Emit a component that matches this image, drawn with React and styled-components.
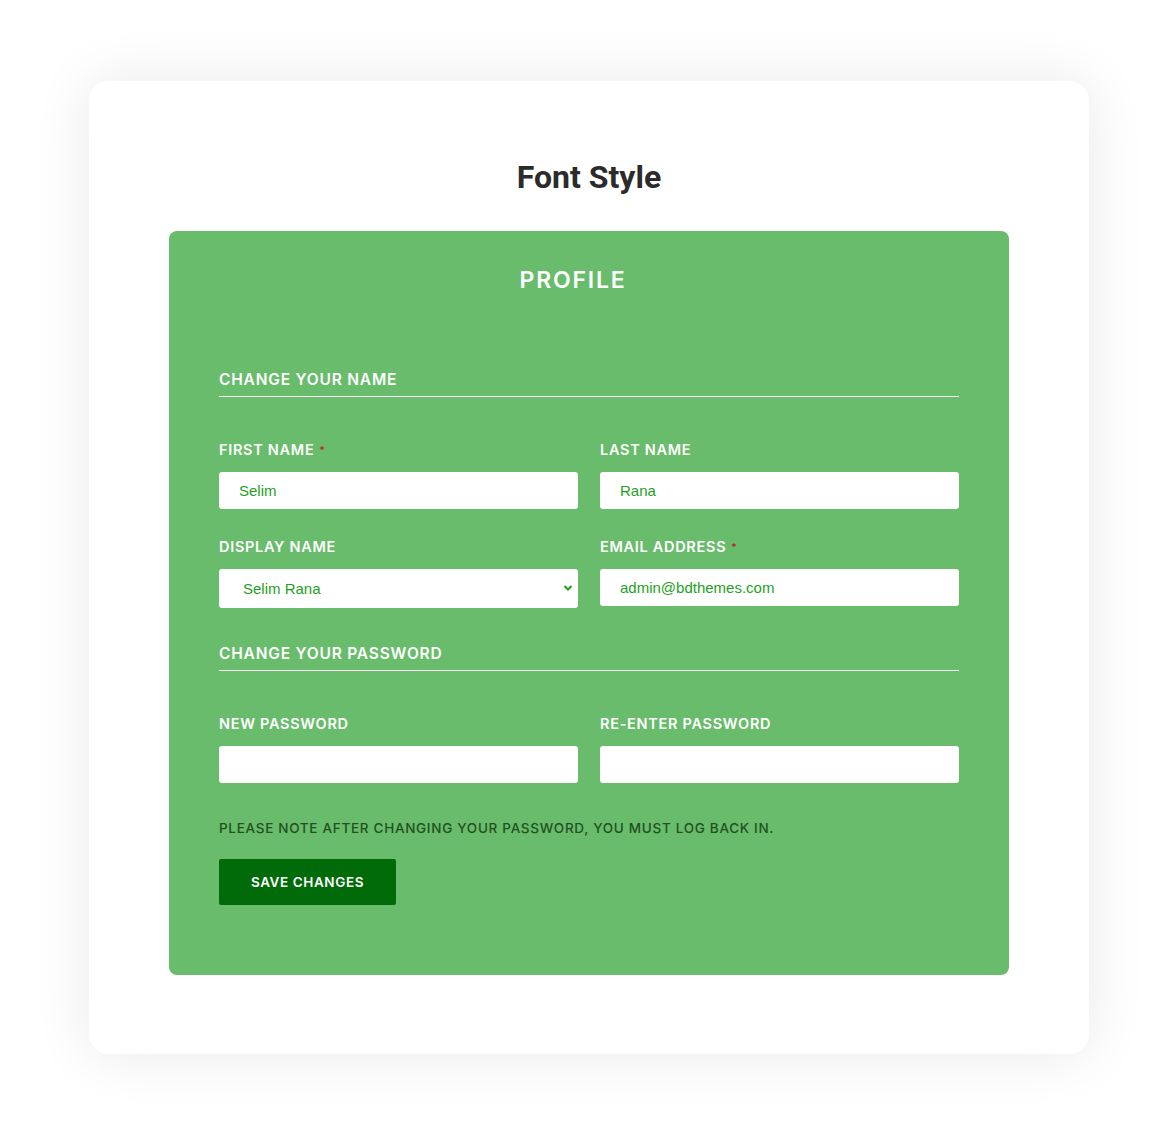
import React from "react"
import styled, { createGlobalStyle } from "styled-components"

const GlobalStyle = createGlobalStyle`
  html, body {
    margin: 0;
    padding: 0;
    background: #ffffff;
  }
  * {
    box-sizing: border-box;
  }
`

const Page = styled.div`
  width: 1173px;
  min-height: 1130px;
  padding: 81px 0 0 89px;
`

const Card = styled.div`
  width: 1000px;
  height: 973px;
  background: #ffffff;
  border-radius: 20px;
  box-shadow: 0 0 60px rgba(0, 0, 0, 0.09);
  padding: 76px 80px 80px;
`

const Title = styled.h2`
  margin: 0 0 34px;
  text-align: center;
  font-family: Roboto, "Liberation Sans", sans-serif;
  font-weight: 700;
  font-size: 32px;
  line-height: 40px;
  color: #2b2b2b;
`

const Panel = styled.div`
  background: #68bc6b;
  border-radius: 8px;
  padding: 34px 50px 70px;
  font-family: Inter, "Liberation Sans", sans-serif;
`

const PanelTitle = styled.h3`
  margin: 0 0 75px;
  padding-right: 32px;
  text-align: center;
  color: #ffffff;
  font-size: 23px;
  font-weight: 600;
  line-height: 30px;
  letter-spacing: 1.8px;
`

const SectionTitle = styled.div`
  color: #ffffff;
  font-size: 15.5px;
  font-weight: 600;
  line-height: 20px;
  letter-spacing: 0.8px;
  padding-bottom: 6px;
  border-bottom: 1px solid #ffffff;
  margin-bottom: ${(p) => p.$gap || 40}px;
`

const Grid = styled.div`
  display: grid;
  grid-template-columns: 359px 359px;
  column-gap: 22px;
  row-gap: 29px;
  margin-bottom: ${(p) => p.$gap || 0}px;
`

const Field = styled.div`
  display: flex;
  flex-direction: column;
`

const Label = styled.label`
  color: #ffffff;
  font-size: 14.5px;
  font-weight: 600;
  line-height: 18px;
  letter-spacing: 0.7px;
  margin-bottom: 13px;
`

const Star = styled.span`
  color: #c0211f;
  font-size: 10px;
  margin-left: 5px;
  vertical-align: top;
`

const Input = styled.input`
  height: 37px;
  border: none;
  outline: none;
  border-radius: 3px;
  background: #ffffff;
  padding: 0 20px;
  font-family: Arial, "Liberation Sans", sans-serif;
  font-size: 15px;
  color: #1f9f1f;
`

const SelectWrap = styled.div`
  position: relative;
  height: 39px;
  border-radius: 3px;
  background: #ffffff;
`

const Select = styled.select`
  width: 100%;
  height: 100%;
  border: none;
  outline: none;
  background: transparent;
  appearance: none;
  padding: 0 24px;
  font-family: Arial, "Liberation Sans", sans-serif;
  font-size: 15px;
  color: #1f9f1f;
`

const Chevron = styled.svg`
  position: absolute;
  right: 5px;
  top: 15px;
  pointer-events: none;
`

const Note = styled.p`
  margin: 0 0 22px;
  color: #22501f;
  font-size: 13.5px;
  font-weight: 500;
  line-height: 18px;
  letter-spacing: 0.7px;
`

const Button = styled.button`
  width: 177px;
  height: 46px;
  border: none;
  border-radius: 2px;
  background: #006b08;
  color: #ffffff;
  font-family: Inter, "Liberation Sans", sans-serif;
  font-size: 13.5px;
  font-weight: 600;
  letter-spacing: 0.6px;
  cursor: pointer;
`

export default function App() {
  return (
    <Page>
      <GlobalStyle />
      <Card>
        <Title>Font Style</Title>
        <Panel>
          <PanelTitle>PROFILE</PanelTitle>

          <SectionTitle $gap={44}>CHANGE YOUR NAME</SectionTitle>
          <Grid $gap={36}>
            <Field>
              <Label>
                FIRST NAME<Star>*</Star>
              </Label>
              <Input defaultValue="Selim" />
            </Field>
            <Field>
              <Label>LAST NAME</Label>
              <Input defaultValue="Rana" />
            </Field>
            <Field>
              <Label>DISPLAY NAME</Label>
              <SelectWrap>
                <Select defaultValue="Selim Rana">
                  <option>Selim Rana</option>
                  <option>Selim</option>
                  <option>Rana</option>
                </Select>
                <Chevron width="10" height="8" viewBox="0 0 10 8">
                  <path d="M1.5 2 L5 5.5 L8.5 2" fill="none" stroke="#1f9f1f" strokeWidth="2" />
                </Chevron>
              </SelectWrap>
            </Field>
            <Field>
              <Label>
                EMAIL ADDRESS<Star>*</Star>
              </Label>
              <Input defaultValue="admin@bdthemes.com" />
            </Field>
          </Grid>

          <SectionTitle $gap={44}>CHANGE YOUR PASSWORD</SectionTitle>
          <Grid $gap={36}>
            <Field>
              <Label>NEW PASSWORD</Label>
              <Input type="password" />
            </Field>
            <Field>
              <Label>RE-ENTER PASSWORD</Label>
              <Input type="password" />
            </Field>
          </Grid>

          <Note>PLEASE NOTE AFTER CHANGING YOUR PASSWORD, YOU MUST LOG BACK IN.</Note>
          <Button>SAVE CHANGES</Button>
        </Panel>
      </Card>
    </Page>
  )
}
